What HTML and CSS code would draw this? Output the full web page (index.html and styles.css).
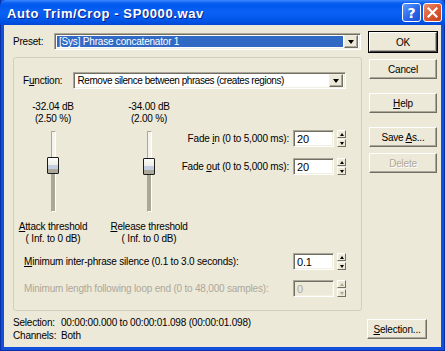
FILE: index.html
```html
<!DOCTYPE html>
<html>
<head>
    <title>Auto Trim/Crop - SP0000.wav</title>
    <link rel="stylesheet" href="styles.css">
</head>
<body>
    <div class="window">
        <div class="titlebar">
            <span class="title">Auto Trim/Crop - SP0000.wav</span>
            <div class="caption-buttons">
                <span class="cap-btn cap-help">?</span>
                <span class="cap-btn cap-close">
                    <svg width="11" height="11" viewBox="0 0 11 11">
                        <path d="M1.5 1.5 L9.5 9.5 M9.5 1.5 L1.5 9.5" stroke="#fff" stroke-width="2.2" stroke-linecap="square"/>
                    </svg>
                </span>
            </div>
        </div>

        <div class="client">
            <div class="main">
                <div class="left">
                    <div class="preset-row">
                        <label class="preset-label">Preset:</label>
                        <div class="combo combo-preset">
                            <span class="combo-text selected">[Sys] Phrase concatenator 1</span>
                            <span class="combo-arrow"><span class="tri-down"></span></span>
                        </div>
                    </div>

                    <div class="groupbox">
                        <div class="function-row">
                            <label class="function-label">F<u>u</u>nction:</label>
                            <div class="combo combo-function">
                                <span class="combo-text">Remove silence between phrases (creates regions)</span>
                                <span class="combo-arrow"><span class="tri-down"></span></span>
                            </div>
                        </div>

                        <div class="slider-row">
                            <div class="slider-col">
                                <div class="slider-value">-32.04 dB<br>(2.50 %)</div>
                                <div class="track">
                                    <div class="track-fill" style="top: 33px"></div>
                                    <div class="thumb" style="top: 25px"></div>
                                </div>
                                <div class="slider-caption"><u>A</u>ttack threshold<br>( Inf. to 0 dB)</div>
                            </div>
                            <div class="slider-col">
                                <div class="slider-value">-34.00 dB<br>(2.00 %)</div>
                                <div class="track">
                                    <div class="track-fill" style="top: 34px"></div>
                                    <div class="thumb" style="top: 26px"></div>
                                </div>
                                <div class="slider-caption"><u>R</u>elease threshold<br>( Inf. to 0 dB)</div>
                            </div>

                            <div class="fade-col">
                                <div class="field-row">
                                    <label>Fade <u>i</u>n (0 to 5,000 ms):</label>
                                    <div class="edit">20</div>
                                    <div class="spin">
                                        <span class="spin-btn"><span class="tri-up"></span></span>
                                        <span class="spin-btn"><span class="tri-down small"></span></span>
                                    </div>
                                </div>
                                <div class="field-row">
                                    <label>Fade <u>o</u>ut (0 to 5,000 ms):</label>
                                    <div class="edit">20</div>
                                    <div class="spin">
                                        <span class="spin-btn"><span class="tri-up"></span></span>
                                        <span class="spin-btn"><span class="tri-down small"></span></span>
                                    </div>
                                </div>
                            </div>
                        </div>

                        <div class="field-row wide first">
                            <label><u>M</u>inimum inter-phrase silence (0.1 to 3.0 seconds):</label>
                            <div class="edit">0.1</div>
                            <div class="spin">
                                <span class="spin-btn"><span class="tri-up"></span></span>
                                <span class="spin-btn"><span class="tri-down small"></span></span>
                            </div>
                        </div>
                        <div class="field-row wide disabled">
                            <label>Minimum length following loop end (0 to 48,000 samples):</label>
                            <div class="edit">0</div>
                            <div class="spin">
                                <span class="spin-btn"><span class="tri-up"></span></span>
                                <span class="spin-btn"><span class="tri-down small"></span></span>
                            </div>
                        </div>
                    </div>
                </div>

                <div class="buttons">
                    <button class="btn btn-default">OK</button>
                    <button class="btn btn-cancel">Cancel</button>
                    <button class="btn btn-gap"><u>H</u>elp</button>
                    <button class="btn btn-gap">Save <u>A</u>s...</button>
                    <button class="btn btn-delete" disabled>Delete</button>
                </div>
            </div>

            <div class="footer">
                <div class="info">
                    <span>Selection:</span><span>00:00:00.000 to 00:00:01.098 (00:00:01.098)</span>
                    <span>Channels:</span><span>Both</span>
                </div>
                <button class="btn btn-selection"><u>S</u>election...</button>
            </div>
        </div>
    </div>
</body>
</html>
```

FILE: styles.css
```css
* {
    box-sizing: border-box;
}

body {
    margin: 0;
    font-family: "Liberation Sans", Arial, sans-serif;
    font-size: 10px;
    letter-spacing: -0.2px;
    color: #000000;
    background: #0a3fd3;
}

u {
    text-decoration: underline;
    text-underline-offset: 1px;
}

.window {
    width: 445px;
    height: 351px;
    display: flex;
    flex-direction: column;
    background: #1250dc;
    padding: 0 3px 3px;
    border-left: 1px solid #0831a8;
    border-right: 1px solid #0831a8;
    border-bottom: 1px solid #0831a8;
}

/* title bar */
.titlebar {
    height: 25px;
    margin: 0 -4px;
    padding: 0 3px 0 7px;
    display: flex;
    align-items: center;
    justify-content: space-between;
    border-radius: 6px 6px 0 0;
    background: linear-gradient(to bottom, #3d8bff 0, #0a5ff0 3px, #0058ee 6px, #0a62f4 12px, #0056e8 20px, #0048d8 25px);
}

.title {
    color: #ffffff;
    font-weight: bold;
    font-size: 13px;
    letter-spacing: 0.6px;
    text-shadow: 1px 1px #0a1f8a;
    padding-top: 1px;
}

.caption-buttons {
    display: flex;
    gap: 2px;
}

.cap-btn {
    width: 19px;
    height: 19px;
    border: 1px solid #ffffff;
    border-radius: 3px;
    display: flex;
    align-items: center;
    justify-content: center;
}

.cap-help {
    background: linear-gradient(135deg, #5c9bff 0%, #2a66ea 55%, #1a4fd6 100%);
    color: #ffffff;
    font-weight: bold;
    font-size: 14px;
    font-family: "DejaVu Sans", sans-serif;
}

.cap-close {
    background: linear-gradient(135deg, #ef8d6c 0%, #de5a33 50%, #c2401c 100%);
}

/* dialog body */
.client {
    flex: 1;
    background: #ece9d8;
    padding: 8px 6px 0 9px;
    display: flex;
    flex-direction: column;
}

.main {
    display: flex;
    gap: 7px;
}

.left {
    width: 349px;
}

.preset-row {
    display: flex;
    align-items: center;
    height: 17px;
}

.preset-label {
    width: 41px;
}

.combo {
    height: 17px;
    display: flex;
    align-items: stretch;
    background: #ffffff;
    border: 1px solid;
    border-color: #aca899 #ffffff #ffffff #aca899;
    box-shadow: inset 1px 1px #716f64, inset -1px -1px #f1efe2;
    padding: 2px;
}

.combo-preset {
    width: 307px;
}

.combo-function {
    width: 276px;
}

.combo-text {
    flex: 1;
    padding-left: 2px;
    line-height: 11px;
    white-space: nowrap;
    overflow: hidden;
}

.combo-function .combo-text {
    letter-spacing: -0.45px;
}

.combo-text.selected {
    background: #316ac5;
    color: #ffffff;
}

.combo-arrow {
    width: 14px;
    margin-left: 1px;
    background: #ece9d8;
    border: 1px solid;
    border-color: #f1efe2 #716f64 #716f64 #f1efe2;
    box-shadow: inset -1px -1px #aca899;
    display: flex;
    align-items: center;
    justify-content: center;
    margin-top: -1px;
    margin-bottom: -1px;
}

.tri-down {
    width: 0;
    height: 0;
    border-left: 3.5px solid transparent;
    border-right: 3.5px solid transparent;
    border-top: 4px solid #000000;
}

.tri-down.small,
.tri-up {
    border-left: 2.5px solid transparent;
    border-right: 2.5px solid transparent;
}

.tri-up {
    width: 0;
    height: 0;
    border-bottom: 3px solid #000000;
}

.tri-down.small {
    border-top-width: 3px;
}

/* group box */
.groupbox {
    margin-top: 7px;
    height: 254px;
    border: 1px solid #d0d0bf;
    border-radius: 3px;
    padding: 14px 15px 0 9px;
    display: flex;
    flex-direction: column;
}

.function-row {
    display: flex;
    align-items: center;
}

.function-label {
    width: 50px;
}

.slider-row {
    display: flex;
    margin-top: 12px;
    height: 144px;
}

.slider-col {
    width: 60px;
    flex: none;
    display: flex;
    flex-direction: column;
    align-items: center;
    margin-right: 36px;
}

.slider-col + .slider-col {
    margin-right: 0;
}

.slider-value,
.slider-caption {
    text-align: center;
    line-height: 12px;
    white-space: nowrap;
}

.track {
    position: relative;
    width: 5px;
    height: 81px;
    margin-top: 6px;
    border-left: 1px solid #aca899;
    border-top: 1px solid #aca899;
    border-right: 1px solid #ffffff;
    border-bottom: 1px solid #ffffff;
    background: #f4f3ee;
}

.track-fill {
    position: absolute;
    left: 0;
    right: 0;
    bottom: 0;
    background: #aca899;
}

.thumb {
    position: absolute;
    left: -5px;
    width: 12px;
    height: 17px;
    border: 1px solid #1c1c1c;
    border-radius: 1px;
    background: linear-gradient(to bottom, #fcfcfa 0, #eeede5 45%, #c4cde0 50%, #c4cde0 70%, #aca899 72%, #aca899 100%);
}

.slider-caption {
    margin-top: 9px;
}

.fade-col {
    flex: 1;
    padding-top: 29px;
    display: flex;
    flex-direction: column;
    align-items: flex-end;
    gap: 11px;
}

.field-row {
    display: flex;
    align-items: center;
    justify-content: flex-end;
    height: 17px;
}

.field-row label {
    margin-right: 4px;
    white-space: nowrap;
}

.field-row.wide {
    justify-content: flex-start;
}

.field-row.wide label {
    margin-left: 1px;
    margin-right: auto;
}

.field-row.first {
    margin-top: 8px;
}

.field-row.wide + .field-row.wide {
    margin-top: 10px;
}

.edit {
    width: 41px;
    height: 17px;
    flex: none;
    background: #ffffff;
    border: 1px solid;
    border-color: #aca899 #ffffff #ffffff #aca899;
    box-shadow: inset 1px 1px #716f64, inset -1px -1px #f1efe2;
    padding: 2px 3px;
    line-height: 12px;
    font-size: 11px;
}

.spin {
    width: 9px;
    height: 17px;
    flex: none;
    margin-left: 3px;
    display: flex;
    flex-direction: column;
    gap: 1px;
}

.spin-btn {
    flex: 1;
    background: #ece9d8;
    border: 1px solid;
    border-color: #ffffff #716f64 #716f64 #ffffff;
    display: flex;
    align-items: center;
    justify-content: center;
}

.field-row.disabled label {
    color: #aca899;
}

.field-row.disabled .edit {
    background: #ece9d8;
    color: #aca899;
}

.field-row.disabled .tri-up {
    border-bottom-color: #aca899;
}

.field-row.disabled .tri-down {
    border-top-color: #aca899;
}

/* push buttons */
.buttons {
    width: 68px;
    display: flex;
    flex-direction: column;
}

.btn {
    height: 20px;
    width: 68px;
    padding: 0;
    font-family: "Liberation Sans", Arial, sans-serif;
    font-size: 10px;
    letter-spacing: -0.2px;
    color: #000000;
    background: #ece9d8;
    border: 1px solid;
    border-color: #ffffff #716f64 #716f64 #ffffff;
    box-shadow: inset -1px -1px #aca899;
}

.btn-default {
    margin-top: -1px;
    outline: 1px solid #000000;
    outline-offset: 0;
    border-color: #ffffff #404040 #404040 #ffffff;
}

.btn-cancel {
    margin-top: 7px;
}

.btn-gap {
    margin-top: 14px;
}

.btn-delete {
    margin-top: 6px;
    color: #aca899;
    text-shadow: 1px 1px #ffffff;
}

.footer {
    display: flex;
    justify-content: space-between;
    align-items: flex-start;
    margin-top: 5px;
}

.info {
    display: grid;
    grid-template-columns: 48px auto;
    line-height: 13px;
    white-space: nowrap;
}

.btn-selection {
    width: 60px;
    margin-top: 3px;
    margin-right: 8px;
}
```
